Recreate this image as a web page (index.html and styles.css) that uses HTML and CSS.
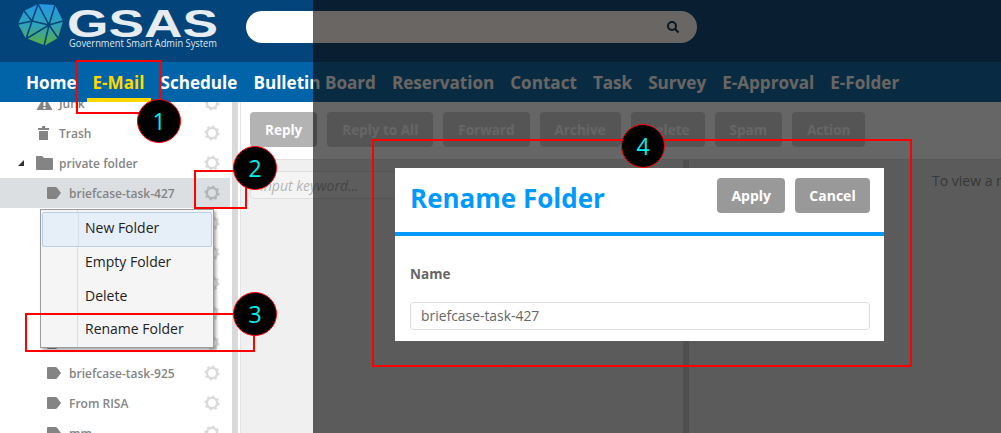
FILE: index.html
```html
<!doctype html>
<html>
<head>
<meta charset="utf-8">
<title>GSAS - Rename Folder</title>
<link rel="stylesheet" href="styles.css">
</head>
<body>
<svg width="0" height="0" class="defs">
  <symbol id="gear" viewBox="0 0 16 16">
    <circle cx="8" cy="8" r="5.100" fill="none" stroke="currentColor" stroke-width="2.400"/>
    <circle cx="8" cy="8" r="6.800" fill="none" stroke="currentColor" stroke-width="1.600" stroke-dasharray="2.400 2.940"/>
  </symbol>
  <symbol id="tag" viewBox="0 0 14 12">
    <path d="M1 0h7.500q1 0 1.600.7L14 6l-3.900 5.300q-.6.7-1.600.7H1q-1 0-1-1V1q0-1 1-1z" fill="currentColor"/>
  </symbol>
</svg>

<header class="top">
  <svg class="logo" width="200" height="50" viewBox="0 0 200 50">
    <defs>
      <linearGradient id="ball" x1="0" y1="0" x2="0" y2="1">
        <stop offset="0" stop-color="#2596e6"/>
        <stop offset=".5" stop-color="#2fa3b8"/>
        <stop offset="1" stop-color="#5dad3e"/>
      </linearGradient>
    </defs>
    <polygon points="20,4 37,5 45,21 40,38 26,46 8,39 0,24 6,11" fill="url(#ball)"/>
    <path d="M20 4L14 21 31 25 20 4M6 11L14 21 0 24M14 21L8 39 31 25 26 46M31 25L45 21M31 25L37 5M8 39L26 46M31 25L40 38" fill="none" stroke="#03447a" stroke-width="1.600"/>
    <text class="logo-name" x="49" y="37" textLength="151" lengthAdjust="spacingAndGlyphs">GSAS</text>
    <text class="logo-sub" x="51" y="47" textLength="148" lengthAdjust="spacingAndGlyphs">Government Smart Admin System</text>
  </svg>
  <div class="search">
    <svg width="14" height="14" viewBox="0 0 14 14"><circle cx="6" cy="6" r="4" fill="none" stroke="currentColor" stroke-width="2"/><path d="M9 9l3.500 3.500" stroke="currentColor" stroke-width="2"/></svg>
  </div>
</header>

<nav class="menu">
  <a>Home</a>
  <a class="on">E-Mail</a>
  <a>Schedule</a>
  <a>Bulletin Board</a>
  <a>Reservation</a>
  <a>Contact</a>
  <a>Task</a>
  <a>Survey</a>
  <a>E-Approval</a>
  <a>E-Folder</a>
</nav>

<div class="content">
  <aside class="tree">
    <div class="row lv1">
      <svg class="ico" width="16" height="14" viewBox="0 0 16 14"><path d="M8 0l8 14H0z" fill="currentColor"/><path d="M7 5h2v5H7zM7 11h2v2H7z" fill="#fff"/></svg>
      <span>Junk</span><svg class="gear"><use href="#gear"/></svg>
    </div>
    <div class="row lv1">
      <svg class="ico trash" width="11" height="14" viewBox="0 0 11 14"><path d="M0 2h4V0h3v2h4v2H0zM1 5h9v9H1z" fill="currentColor"/></svg>
      <span>Trash</span><svg class="gear"><use href="#gear"/></svg>
    </div>
    <div class="row lv1">
      <i class="arrow"></i>
      <svg class="ico" width="17" height="14" viewBox="0 0 17 14"><path d="M1 0h5l2 2h8q1 0 1 1v10q0 1-1 1H1q-1 0-1-1V1q0-1 1-1z" fill="currentColor"/></svg>
      <span>private folder</span><svg class="gear"><use href="#gear"/></svg>
    </div>
    <div class="row lv2 sel">
      <svg class="ico"><use href="#tag"/></svg>
      <span>briefcase-task-427</span><svg class="gear"><use href="#gear"/></svg>
    </div>
    <div class="row lv2"><svg class="ico"><use href="#tag"/></svg><span></span><svg class="gear"><use href="#gear"/></svg></div>
    <div class="row lv2"><svg class="ico"><use href="#tag"/></svg><span></span><svg class="gear"><use href="#gear"/></svg></div>
    <div class="row lv2"><svg class="ico"><use href="#tag"/></svg><span></span><svg class="gear"><use href="#gear"/></svg></div>
    <div class="row lv2"><svg class="ico"><use href="#tag"/></svg><span></span><svg class="gear"><use href="#gear"/></svg></div>
    <div class="row lv2"><svg class="ico"><use href="#tag"/></svg><span></span><svg class="gear"><use href="#gear"/></svg></div>
    <div class="row lv2">
      <svg class="ico"><use href="#tag"/></svg>
      <span>briefcase-task-925</span><svg class="gear"><use href="#gear"/></svg>
    </div>
    <div class="row lv2">
      <svg class="ico"><use href="#tag"/></svg>
      <span>From RISA</span><svg class="gear"><use href="#gear"/></svg>
    </div>
    <div class="row lv2">
      <svg class="ico"><use href="#tag"/></svg>
      <span>mm</span><svg class="gear"><use href="#gear"/></svg>
    </div>
  </aside>
  <div class="split"></div>
  <main class="main">
    <div class="tools">
      <button class="btn first">Reply</button>
      <button class="btn">Reply to All</button>
      <button class="btn">Forward</button>
      <button class="btn">Archive</button>
      <button class="btn">Delete</button>
      <button class="btn">Spam</button>
      <button class="btn">Action</button>
    </div>
    <div class="panes">
      <div class="list">
        <div class="keyword">Input keyword...</div>
      </div>
      <div class="vsplit"></div>
      <div class="preview">To view a message</div>
    </div>
  </main>
</div>

<ul class="ctx">
  <li class="hover">New Folder</li>
  <li>Empty Folder</li>
  <li>Delete</li>
  <li>Rename Folder</li>
</ul>

<div class="overlay"></div>

<section class="modal">
  <div class="modal-head">
    <h1>Rename Folder</h1>
    <button class="mbtn">Apply</button>
    <button class="mbtn cancel">Cancel</button>
  </div>
  <div class="modal-body">
    <label>Name</label>
    <div class="field">briefcase-task-427</div>
  </div>
</section>

<div class="mark m1"></div>
<div class="mark m2"></div>
<div class="mark m3"></div>
<div class="mark m4"></div>
<div class="num n1">1</div>
<div class="num n2">2</div>
<div class="num n3">3</div>
<div class="num n4">4</div>
</body>
</html>
```

FILE: styles.css
```css
html, body {
    margin: 0;
    padding: 0;
}
body {
    position: relative;
    width: 1001px;
    height: 433px;
    overflow: hidden;
    display: flex;
    flex-direction: column;
    font-family: "Open Sans", "Liberation Sans", sans-serif;
    font-size: 13px;
    background: #fff;
}
.defs {
    position: absolute;
}

/* top bar */
.top {
    flex: none;
    height: 62px;
    display: flex;
    align-items: flex-start;
    background: #03447a;
    padding-left: 18px;
    box-sizing: border-box;
}
.logo {
    flex: none;
}
.logo-name {
    font-family: "Liberation Sans", sans-serif;
    font-weight: 700;
    font-size: 38px;
    fill: #e6ecf1;
}
.logo-sub {
    font-family: "Open Sans", sans-serif;
    font-size: 10px;
    fill: #dfe7ee;
}
.search {
    margin: 11px 0 0 28px;
    width: 451px;
    height: 32px;
    box-sizing: border-box;
    background: #fff;
    border-radius: 16px;
    display: flex;
    align-items: center;
    justify-content: flex-end;
    padding-right: 17px;
    color: #03304f;
}

/* main menu */
.menu {
    flex: none;
    height: 40px;
    display: flex;
    gap: 4px;
    padding-left: 20px;
    background: #0264a8;
}
.menu a {
    display: block;
    padding: 0 6px;
    line-height: 42px;
    font-size: 17.100px;
    font-weight: 700;
    color: #fff;
    box-sizing: border-box;
}
.menu a.on {
    color: #ffd800;
    border-bottom: 4px solid #ffd800;
    height: 40px;
}

.content {
    flex: 1;
    display: flex;
    min-height: 0;
}

/* folder tree */
.tree {
    flex: none;
    width: 232px;
    margin-top: -14px;
    padding-right: 2px;
    box-sizing: border-box;
    position: relative;
    z-index: -1;
}
.row {
    height: 30px;
    display: flex;
    align-items: center;
    position: relative;
    color: #848484;
    font-size: 12px;
    font-weight: 600;
}
.row span {
    flex: 1;
}
.lv1 {
    padding-left: 36px;
}
.lv2 {
    padding-left: 47px;
}
.sel {
    background: #dcdfe2;
}
.ico {
    flex: none;
    width: 14px;
    height: 12px;
    margin-right: 8px;
}
.lv1 .ico {
    width: 17px;
    height: 14px;
    margin-right: 6px;
}
.lv1 .ico.trash {
    width: 11px;
    margin: 0 10px 0 2px;
}
.arrow {
    position: absolute;
    left: 18px;
    top: 12px;
    width: 0;
    height: 0;
    border-left: 6px solid transparent;
    border-bottom: 6px solid #333;
}
.gear {
    flex: none;
    width: 16px;
    height: 16px;
    margin-right: 10px;
    color: #dadada;
}
.sel .gear {
    color: #b4b4b4;
}
.split {
    flex: none;
    width: 6px;
    background: #d9d9d9;
}

/* mail panel */
.main {
    flex: 1;
    min-width: 0;
    display: flex;
    flex-direction: column;
    margin-left: 2px;
    border-left: 1px solid #e4e4e4;
    background: #f0f0f0;
}
.tools {
    flex: none;
    height: 58px;
    box-sizing: border-box;
    padding: 10px 0 0 9px;
    display: flex;
    gap: 10px;
    align-items: flex-start;
    background: #fff;
    border-bottom: 1px solid #dfdfdf;
}
.btn {
    height: 35px;
    padding: 0 15px;
    border: 0;
    border-radius: 4px;
    background: #d4d4d4;
    color: #fff;
    font: 700 13.500px "Open Sans", sans-serif;
}
.btn.first {
    background: #b3b3b3;
}
.panes {
    flex: 1;
    display: flex;
    min-height: 0;
}
.list {
    flex: none;
    width: 442px;
    padding-top: 11px;
    box-sizing: border-box;
}
.keyword {
    height: 28px;
    box-sizing: border-box;
    margin-left: 9px;
    padding-left: 9px;
    border: 1px solid #dedede;
    border-right: 0;
    border-radius: 0 0 0 5px;
    background: #f4f4f4;
    color: #b5b5b5;
    font-size: 14px;
    font-style: italic;
    line-height: 28px;
}
.vsplit {
    flex: none;
    width: 6px;
    background: #cfcfcf;
}
.preview {
    flex: 1;
    min-width: 0;
    overflow: hidden;
    padding: 11px 0 0 243px;
    white-space: nowrap;
    color: #929292;
    font-size: 14px;
}

/* context menu */
.ctx {
    position: absolute;
    left: 40px;
    top: 209px;
    width: 174px;
    height: 139px;
    box-sizing: border-box;
    margin: 0;
    padding: 2px 1px;
    list-style: none;
    font-size: 14px;
    background: linear-gradient(to right, #f5f5f5 36px, #dcdcdc 36px, #dcdcdc 37px, #f5f5f5 37px);
    border: 1px solid #9c9c9c;
    box-shadow: 2px 2px 3px rgba(0, 0, 0, .35);
    color: #222;
}
.ctx li {
    height: 33.500px;
    line-height: 31px;
    padding-left: 43px;
    box-sizing: border-box;
}
.ctx li.hover {
    height: 35px;
    margin-bottom: -1px;
    line-height: 29px;
    background: linear-gradient(to right, #e6eef7 35px, #d5dde6 35px, #d5dde6 36px, #e6eef7 36px);
    border: 1px solid #b9cfe4;
    border-radius: 2px;
    padding-left: 42px;
}

/* dim + dialog */
.overlay {
    position: absolute;
    left: 313px;
    right: 0;
    top: 0;
    bottom: 0;
    background: linear-gradient(to bottom,
        rgba(12, 8, 4, .62) 102px,
        rgba(0, 0, 0, .6) 102px,
        rgba(0, 0, 0, .6) 160px,
        rgba(0, 0, 0, .62) 160px);
}
.modal {
    position: absolute;
    left: 395px;
    top: 168px;
    width: 489px;
    height: 173px;
    overflow: hidden;
    background: #fff;
}
.modal-head {
    height: 68px;
    box-sizing: border-box;
    display: flex;
    align-items: flex-start;
    gap: 10px;
    padding: 10px 14px 0 15px;
    border-bottom: 4px solid #0099ff;
}
.modal-head h1 {
    flex: 1;
    margin: 0;
    color: #0099ff;
    font-size: 26px;
    font-weight: 700;
    line-height: 40px;
}
.mbtn {
    height: 35px;
    padding: 0 14px;
    border: 0;
    border-radius: 4px;
    background: #999;
    color: #fff;
    font: 700 14px "Open Sans", sans-serif;
}
.mbtn.cancel {
    min-width: 75px;
}
.modal-body {
    padding: 29px 14px 0 15px;
}
.modal-body label {
    display: block;
    color: #666;
    font-size: 13.500px;
    font-weight: 700;
    line-height: 18px;
    margin-bottom: 19px;
}
.field {
    height: 28px;
    box-sizing: border-box;
    padding-left: 10px;
    border: 1px solid #ddd;
    border-radius: 4px;
    color: #666;
    line-height: 26px;
    font-size: 13.900px;
}

/* callouts drawn on the screenshot */
.mark {
    position: absolute;
    box-sizing: border-box;
    border: 2px solid #f00;
}
.m1 { left: 76px; top: 60px; width: 85px; height: 54px; }
.m2 { left: 194px; top: 170px; width: 53px; height: 39px; }
.m3 { left: 25px; top: 313px; width: 230px; height: 39px; }
.m4 { left: 372px; top: 139px; width: 540px; height: 228px; }
.num {
    position: absolute;
    width: 44px;
    height: 44px;
    box-sizing: border-box;
    border: 1px solid #f00;
    border-radius: 50%;
    background: #000;
    color: #0ee;
    font-size: 23px;
    line-height: 42px;
    text-align: center;
}
.n1 { left: 137px; top: 99px; }
.n2 { left: 233px; top: 146px; }
.n3 { left: 233px; top: 292px; }
.n4 { left: 621px; top: 124px; }
```
